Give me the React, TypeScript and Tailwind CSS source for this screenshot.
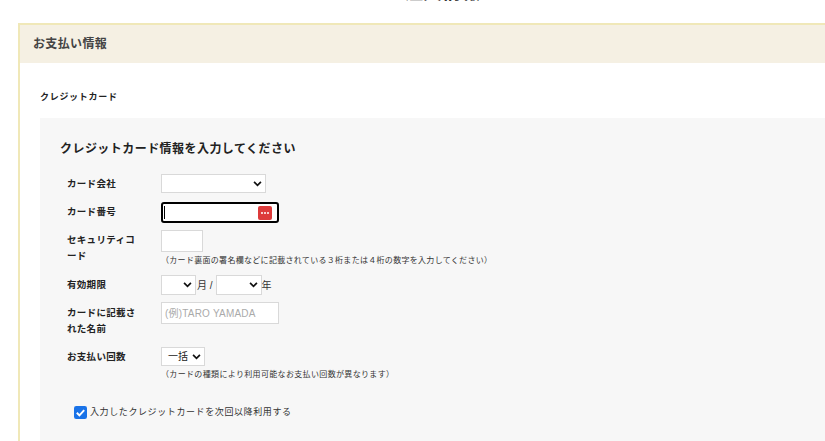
const jp = "font-['Liberation_Sans','Noto_Sans_CJK_JP',sans-serif]";

function Chevron() {
  return (
    <svg viewBox="0 0 10 7" className="h-[6px] w-[9px]" fill="none" stroke="#111" strokeWidth="2">
      <path d="M1 1l4 4 4-4" />
    </svg>
  );
}

function Select({ w, label, h = "h-[19px]" }: { w: string; label?: string; h?: string }) {
  return (
    <div className={`${w} ${h} flex items-center justify-between border border-[#d9d9d9] bg-white pl-[6px] pr-[3px] text-[10px] text-[#222]`}>
      <span>{label}</span>
      <Chevron />
    </div>
  );
}

function Row({ label, children, className }: { label: React.ReactNode; children: React.ReactNode; className?: string }) {
  return (
    <div className={`flex ${className ?? ""}`}>
      <div className="w-[94px] shrink-0 pt-[2px] text-[9.5px] font-bold leading-[16px] tracking-[0.3px] text-[#222]">{label}</div>
      <div>{children}</div>
    </div>
  );
}

export default function App() {
  return (
    <div className={`${jp} h-[441px] w-[825px] overflow-hidden bg-white`}>
      <div className="flex h-[23px] items-end justify-center overflow-hidden pl-[40px]">
        <div className="mb-[20px] text-[19px] font-bold leading-[20px] text-[#333]">ご注文情報</div>
      </div>
      <div className="ml-[18px] h-[500px] border-l-2 border-t-2 border-[#f0e8b8]">
        <div className="flex h-[38px] items-center bg-[#f5f0e3] pb-[1px] pl-[13px] text-[12px] font-bold tracking-[0.35px] text-[#444]">お支払い情報</div>
        <div className="pl-[20px]">
          <div className="flex h-[55px] items-center pt-[15px] text-[9px] font-bold tracking-[0.7px] text-[#222]">クレジットカード</div>
          <div className="h-[400px] bg-[#f7f7f7] pl-[20px] pt-[23px]">
            <div className="text-[12px] font-bold leading-[16px] tracking-[0.45px] text-[#222]">クレジットカード情報を入力してください</div>
            <div className="ml-[7px] mt-[17px] flex flex-col">
              <Row label="カード会社" className="h-[28px]">
                <Select w="w-[105px]" />
              </Row>
              <Row label="カード番号" className="h-[28px]">
                <div className="flex h-[21px] w-[118px] items-center justify-between rounded-[3px] border-2 border-black bg-white pl-[1px] pr-[5px]">
                  <div className="h-[13px] w-px bg-black" />
                  <div className="flex h-[14px] w-[14px] items-center justify-center gap-px rounded-[2px] bg-[#dd3b3b]">
                    <span className="h-[2px] w-[2px] rounded-full bg-white" />
                    <span className="h-[2px] w-[2px] rounded-full bg-white" />
                    <span className="h-[2px] w-[2px] rounded-full bg-white" />
                  </div>
                </div>
              </Row>
              <Row label={<>セキュリティコ<br />ード</>} className="h-[45px]">
                <div className="h-[22px] w-[42px] border border-[#d9d9d9] bg-white" />
                <div className="mt-[2px] text-[8px] leading-[14px] tracking-[0.3px] text-[#333]">（カード裏面の署名欄などに記載されている３桁または４桁の数字を入力してください）</div>
              </Row>
              <Row label="有効期限" className="h-[27px]">
                <div className="flex items-center text-[10px] text-[#333]">
                  <Select w="w-[35px]" h="h-[20px]" />
                  <span className="ml-px">月 /</span>
                  <div className="ml-[3px]"><Select w="w-[46px]" h="h-[20px]" /></div>
                  <span>年</span>
                </div>
              </Row>
              <Row label={<><span className="block pt-px">カードに記載さ</span>れた名前</>} className="h-[45px]">
                <div className="flex h-[22px] w-[118px] items-center border border-[#d9d9d9] bg-white pl-[3px] text-[10px] tracking-[0.2px] text-[#aaa]">(例)TARO YAMADA</div>
              </Row>
              <Row label="お支払い回数" className="h-[46px]">
                <Select w="w-[44px]" label="一括" />
                <div className="mt-[3px] text-[8px] leading-[12px] tracking-[0.34px] text-[#333]">（カードの種類により利用可能なお支払い回数が異なります）</div>
              </Row>
            </div>
            <label className="ml-[14px] mt-[13px] flex items-center gap-[3px] text-[9px] tracking-[0.6px] text-[#333]">
              <svg viewBox="0 0 12 12" className="h-[13px] w-[13px]">
                <rect width="12" height="12" rx="2" fill="#1a73e8" />
                <path d="M2.6 6.2l2.4 2.4 4.4-4.8" fill="none" stroke="#fff" strokeWidth="1.8" />
              </svg>
              入力したクレジットカードを次回以降利用する
            </label>
          </div>
        </div>
      </div>
    </div>
  );
}
